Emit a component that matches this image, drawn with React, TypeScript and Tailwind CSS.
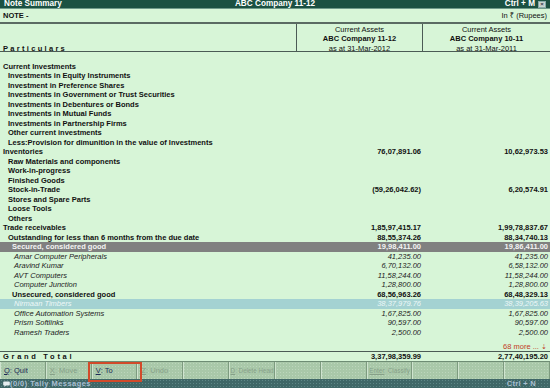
import React from "react";

type Row = {
    t: string;
    l: 0 | 1 | 2 | 3;
    a?: string;
    b?: string;
    hl?: "gray" | "teal";
};

const rows: Row[] = [
    { t: "Current Investments", l: 0 },
    { t: "Investments in Equity Instruments", l: 1 },
    { t: "Investment in Preference Shares", l: 1 },
    { t: "Investments in Government or Trust Securities", l: 1 },
    { t: "Investments in Debentures or Bonds", l: 1 },
    { t: "Investments in Mutual Funds", l: 1 },
    { t: "Investments in Partnership Firms", l: 1 },
    { t: "Other current investments", l: 1 },
    { t: "Less:Provision for dimunition in the value of Investments", l: 1 },
    { t: "Inventories", l: 0, a: "76,07,891.06", b: "10,62,973.53" },
    { t: "Raw Materials and components", l: 1 },
    { t: "Work-in-progress", l: 1 },
    { t: "Finished Goods", l: 1 },
    { t: "Stock-in-Trade", l: 1, a: "(59,26,042.62)", b: "6,20,574.91" },
    { t: "Stores and Spare Parts", l: 1 },
    { t: "Loose Tools", l: 1 },
    { t: "Others", l: 1 },
    { t: "Trade receivables", l: 0, a: "1,85,97,415.17", b: "1,99,78,837.67" },
    { t: "Outstanding for less than 6 months from the due date", l: 1, a: "88,55,374.26", b: "88,34,740.13" },
    { t: "Secured, considered good", l: 2, a: "19,98,411.00", b: "19,86,411.00", hl: "gray" },
    { t: "Amar Computer Peripherals", l: 3, a: "41,235.00", b: "41,235.00" },
    { t: "Aravind Kumar", l: 3, a: "6,70,132.00", b: "6,58,132.00" },
    { t: "AVT Computers", l: 3, a: "11,58,244.00", b: "11,58,244.00" },
    { t: "Computer Junction", l: 3, a: "1,28,800.00", b: "1,28,800.00" },
    { t: "Unsecured, considered good", l: 2, a: "68,56,963.26", b: "68,48,329.13" },
    { t: "Nirmaan Timbers", l: 3, a: "38,37,979.76", b: "38,39,205.63", hl: "teal" },
    { t: "Office Automation Systems", l: 3, a: "1,67,825.00", b: "1,67,825.00" },
    { t: "Prism Softlinks", l: 3, a: "90,597.00", b: "90,597.00" },
    { t: "Ramesh Traders", l: 3, a: "2,500.00", b: "2,500.00" },
];

const indent = ["pl-[3px]", "pl-[8px]", "pl-[12px]", "pl-[14px]"];

const buttons: { k?: string; label?: string; off?: boolean; small?: boolean }[] = [
    { k: "Q", label: ": Quit" },
    { k: "X", label: ": Move", off: true },
    { k: "V", label: ": To" },
    { k: "Z", label: ": Undo", off: true },
    {},
    { k: "D", label: ": Delete Head", off: true, small: true },
    {},
    {},
    { k: "Enter", label: ": Classify", off: true, small: true },
    {},
    {},
    {},
];

const TableRow = ({ r }: { r: Row }) => {
    const bg =
        r.hl === "gray"
            ? "bg-[#808080] text-[#f4f4f4]"
            : r.hl === "teal"
            ? "bg-[#a4d2d2] text-[#eef8f8]"
            : r.l === 3
            ? "text-[#222]"
            : "text-[#111]";
    const weight = r.l === 3 ? "italic font-normal" : "font-bold";
    return (
        <div className={`flex h-[9.5px] leading-[9.5px] ${bg} ${weight}`}>
            <div className={`w-[296px] whitespace-nowrap ${indent[r.l]}`}>{r.t}</div>
            <div className="w-[126px] text-right pr-[1px]">{r.a}</div>
            <div className="flex-1 text-right pr-[2px]">{r.b}</div>
        </div>
    );
};

export default function App() {
    return (
        <div className="w-[550px] h-[388px] overflow-hidden bg-[#d7f5d7] font-['Liberation_Sans','Noto_Sans',sans-serif] text-[7.5px] text-[#111] flex flex-col">
            {/* title bar */}
            <div className="h-[9px] bg-[#1b5142] border-b border-[#6f9a8a] text-white font-bold text-[8.2px] leading-[8px] flex items-center px-[4px] relative">
                <span>Note Summary</span>
                <span className="absolute left-0 right-0 text-center">ABC Company 11-12</span>
                <span className="ml-auto mr-[3px]">Ctrl + M</span>
                <span className="w-[8px] h-[7px] bg-[#c8d4d0] border border-[#8aa] text-[#334] text-[6px] leading-[5px] flex items-center justify-center">
                    ×
                </span>
            </div>

            {/* NOTE row */}
            <div className="h-[13px] flex items-center px-[3px]">
                <span className="font-bold">NOTE -</span>
                <span className="ml-auto">In ₹ (Rupees)</span>
            </div>
            <div className="h-[2px] bg-[#5b6b63]" />

            {/* column headers */}
            <div className="flex h-[28px] border-b border-[#4b5b55] leading-[9.5px]">
                <div className="w-[296px] pl-[3px] pt-[19.5px] font-bold tracking-[2.3px]">
                    Particulars
                </div>
                <div className="w-[126px] border-l border-[#4b5b55] text-center pt-[0.5px]">
                    <div>Current Assets</div>
                    <div className="font-bold">ABC Company 11-12</div>
                    <div>as at 31-Mar-2012</div>
                </div>
                <div className="flex-1 border-l border-[#4b5b55] text-center pt-[0.5px]">
                    <div>Current Assets</div>
                    <div className="font-bold">ABC Company 10-11</div>
                    <div>as at 31-Mar-2011</div>
                </div>
            </div>

            {/* body */}
            <div className="flex-1 pt-[9.5px] flex flex-col">
                {rows.map((r) => (
                    <TableRow key={r.t} r={r} />
                ))}
                <div className="mt-auto h-[9.5px] leading-[9.5px] text-right pr-[3px] text-[#c23b1f]">
                    68 more ... <span className="text-[7px]">⇣</span>
                </div>
            </div>

            {/* grand total */}
            <div className="flex h-[10px] leading-[9.5px] border-t border-[#4b5b55] font-bold">
                <div className="w-[296px] pl-[3px] tracking-[2.7px]">Grand Total</div>
                <div className="w-[126px] text-right pr-[1px]">3,37,98,359.99</div>
                <div className="flex-1 text-right pr-[2px]">2,77,40,195.20</div>
            </div>

            {/* footer */}
            <div className="relative">
                <div className="grid grid-cols-12 h-[18px] bg-[#a9c8a9] border-t border-[#6e8c74] bg-[radial-gradient(#bcd6bc_0.6px,transparent_0.6px)] bg-[length:3px_3px]">
                    {buttons.map((b, i) => (
                        <div
                            key={i}
                            className={`flex items-center border-l border-l-[#cfe4cf] border-r border-r-[#7d9b7f] whitespace-nowrap overflow-hidden ${
                                b.small ? "text-[6.3px] justify-center" : "pl-[3px]"
                            } ${b.off ? "text-[#86a088]" : "text-[#1d2b55]"}`}
                        >
                            {b.k && (
                                <>
                                    <span className="underline">{b.k}</span>
                                    {b.label}
                                </>
                            )}
                        </div>
                    ))}
                </div>
                <div className="h-[9px] bg-[#3f6767] bg-[radial-gradient(#5c8585_0.6px,transparent_0.6px)] bg-[length:3px_3px] flex items-center pl-[3px] pr-[14px] text-[#a9bfd2] font-bold text-[7.5px] leading-[8px] tracking-[0.45px]">
                    <svg width="7" height="6" viewBox="0 0 7 6">
                        <path d="M1 0.5h5a0.8 0.8 0 0 1 0.8 0.8v2.4a0.8 0.8 0 0 1 -0.8 0.8h-3l-1.5 1.3v-1.3h-0.5a0.8 0.8 0 0 1 -0.8 -0.8v-2.4a0.8 0.8 0 0 1 0.8 -0.8z" fill="#e6eef0" />
                    </svg>
                    <span>(0/0) Tally Messages</span>
                    <span className="ml-auto tracking-[0.3px]">Ctrl + N</span>
                </div>
                <div className="absolute left-[88px] top-[1px] w-[54px] h-[20px] border-2 border-[#d24a2a]" />
            </div>
        </div>
    );
}
